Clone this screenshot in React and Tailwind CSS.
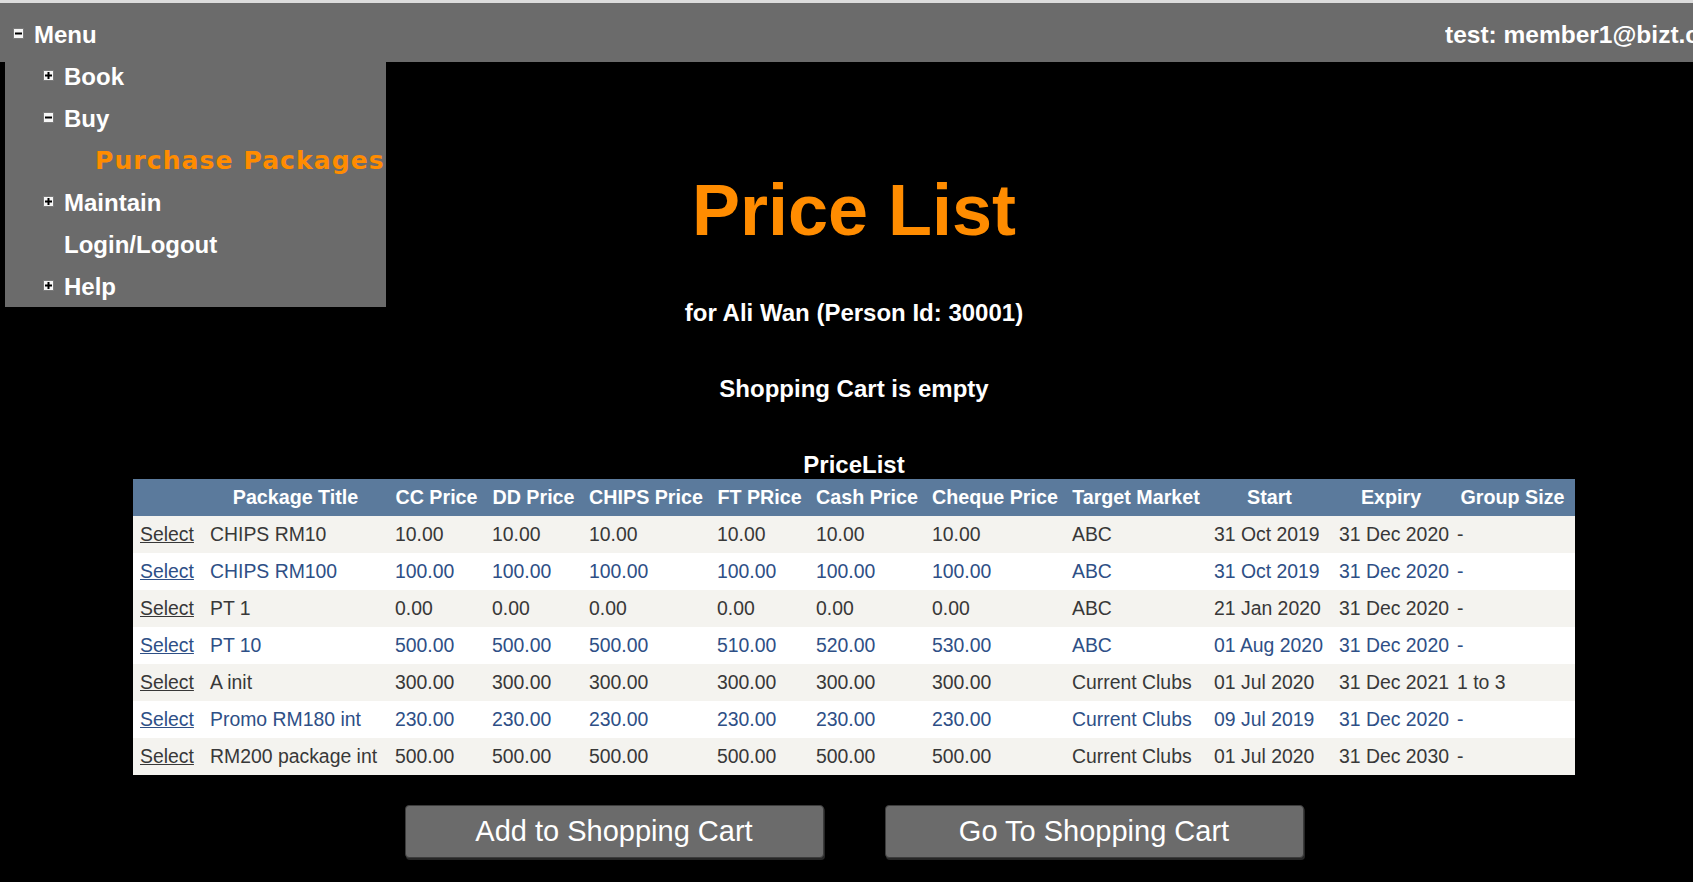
import React from 'react'

const cols = [70, 185, 97, 97, 128, 99, 116, 140, 142, 125, 118, 125]

const headers = ['', 'Package Title', 'CC Price', 'DD Price', 'CHIPS Price', 'FT PRice', 'Cash Price', 'Cheque Price', 'Target Market', 'Start', 'Expiry', 'Group Size']

const packages = [
    ['CHIPS RM10', '10.00', '10.00', '10.00', '10.00', '10.00', '10.00', 'ABC', '31 Oct 2019', '31 Dec 2020', '-'],
    ['CHIPS RM100', '100.00', '100.00', '100.00', '100.00', '100.00', '100.00', 'ABC', '31 Oct 2019', '31 Dec 2020', '-'],
    ['PT 1', '0.00', '0.00', '0.00', '0.00', '0.00', '0.00', 'ABC', '21 Jan 2020', '31 Dec 2020', '-'],
    ['PT 10', '500.00', '500.00', '500.00', '510.00', '520.00', '530.00', 'ABC', '01 Aug 2020', '31 Dec 2020', '-'],
    ['A init', '300.00', '300.00', '300.00', '300.00', '300.00', '300.00', 'Current Clubs', '01 Jul 2020', '31 Dec 2021', '1 to 3'],
    ['Promo RM180 int', '230.00', '230.00', '230.00', '230.00', '230.00', '230.00', 'Current Clubs', '09 Jul 2019', '31 Dec 2020', '-'],
    ['RM200 package int', '500.00', '500.00', '500.00', '500.00', '500.00', '500.00', 'Current Clubs', '01 Jul 2020', '31 Dec 2030', '-'],
]

// small tree expander box, open shows a minus, closed a plus
function Toggle({ open }) {
    return (
        <svg width="11" height="11" viewBox="0 0 11 11" className="shrink-0">
            <rect x="0.5" y="0.5" width="10" height="10" fill="#f6f6f6" stroke="#7a7a7a" />
            <rect x="2" y="4.5" width="7" height="2" fill="#000" />
            {!open && <rect x="4.5" y="2" width="2" height="7" fill="#000" />}
        </svg>
    )
}

function MenuItem({ toggle, open, children }) {
    return (
        <div className="h-[28px] flex items-center">
            <div className="w-[38px] pl-[38px] flex items-center -mt-[4px]">
                {toggle && <Toggle open={open} />}
            </div>
            <span className="ml-[21px] text-[24px] leading-[24px] font-bold text-white">{children}</span>
        </div>
    )
}

export default function App() {
    return (
        <div className="min-h-screen bg-black relative overflow-hidden" style={{ fontFamily: '"Liberation Sans", Arial, sans-serif' }}>
            {/* top bar */}
            <div className="border-t-[3px] border-[#dcdcdc] bg-[#6b6b6b] h-[62px] flex items-start pt-[20px]">
                <div className="flex items-center pl-[13px]">
                    <div className="-mt-[4px]"><Toggle open /></div>
                    <span className="ml-[10px] text-[24px] leading-[24px] font-bold text-white">Menu</span>
                </div>
                <div className="ml-auto w-[248px] overflow-hidden whitespace-nowrap text-[24.5px] leading-[24px] font-bold text-white">
                    test: member1@bizt.com.my
                </div>
            </div>

            {/* dropdown menu */}
            <div className="absolute left-[5px] top-[62px] w-[381px] bg-[#6b6b6b] flex flex-col gap-[14px] pt-[1px] pb-[6px] z-10">
                <MenuItem toggle>Book</MenuItem>
                <MenuItem toggle open>Buy</MenuItem>
                <div className="h-[28px] flex items-center pl-[90px]">
                    <span className="text-[25px] leading-[24px] font-bold text-[#ff8c00] tracking-[1.1px] whitespace-nowrap" style={{ fontFamily: '"DejaVu Sans", Verdana, sans-serif' }}>
                        Purchase Packages
                    </span>
                </div>
                <MenuItem toggle>Maintain</MenuItem>
                <MenuItem>Login/Logout</MenuItem>
                <MenuItem toggle>Help</MenuItem>
            </div>

            {/* page body */}
            <div className="pl-[15px] flex flex-col items-center">
                <h1 className="mt-[112px] text-[72px] leading-none font-bold text-[#ff8c00]">Price List</h1>
                <p className="mt-[55px] text-[24px] leading-[24px] font-bold text-white">for Ali Wan (Person Id: 30001)</p>
                <p className="mt-[52px] text-[24px] leading-[24px] font-bold text-white">Shopping Cart is empty</p>

                <div className="mt-[52px] text-[24px] leading-[24px] font-bold text-white">PriceList</div>
                <table className="mt-[2px] w-[1442px] table-fixed border-collapse text-[19.4px]">
                    <colgroup>
                        {cols.map((w, i) => <col key={i} style={{ width: w }} />)}
                    </colgroup>
                    <thead>
                        <tr className="h-[37px] bg-[#5b7a9c]">
                            {headers.map((h, i) => (
                                <th key={i} className="px-[6px] text-center text-[19.7px] font-bold text-white whitespace-nowrap">{h}</th>
                            ))}
                        </tr>
                    </thead>
                    <tbody>
                        {packages.map((row, r) => {
                            const alt = r % 2 === 1
                            const color = alt ? 'text-[#2e4f86]' : 'text-[#383838]'
                            return (
                                <tr key={r} className={`h-[37px] ${alt ? 'bg-white' : 'bg-[#f4f3ef]'} ${color}`}>
                                    <td className="px-[7px]"><a href="#" className="underline">Select</a></td>
                                    {row.map((c, i) => (
                                        <td key={i} className="px-[7px] whitespace-nowrap">{c}</td>
                                    ))}
                                </tr>
                            )
                        })}
                    </tbody>
                </table>

                <div className="mt-[30px] flex gap-[61px]">
                    <button className="w-[419px] h-[53px] rounded-[4px] bg-[#6b6b6b] border border-[#3c3c3c] shadow-[1px_2px_0_#262626] text-white text-[29px]">
                        Add to Shopping Cart
                    </button>
                    <button className="w-[419px] h-[53px] rounded-[4px] bg-[#6b6b6b] border border-[#3c3c3c] shadow-[1px_2px_0_#262626] text-white text-[29px]">
                        Go To Shopping Cart
                    </button>
                </div>
            </div>
        </div>
    )
}
